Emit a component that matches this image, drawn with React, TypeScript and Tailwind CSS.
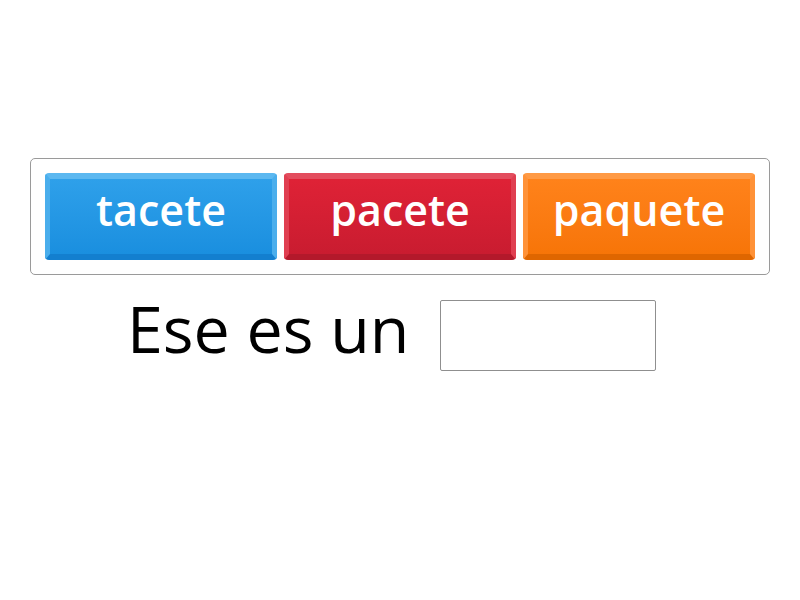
const words = [
  {
    text: "tacete",
    edge: "border-t-[#5cb8f0] border-l-[#4aaeec] border-r-[#4aaeec] border-b-[#137fcf]",
    face: "bg-gradient-to-b from-[#2ea0ea] to-[#1a8fdf]",
  },
  {
    text: "pacete",
    edge: "border-t-[#e34d5e] border-l-[#e03f51] border-r-[#e03f51] border-b-[#b3192b]",
    face: "bg-gradient-to-b from-[#df2236] to-[#c91c30]",
  },
  {
    text: "paquete",
    edge: "border-t-[#ff9a45] border-l-[#ff9238] border-r-[#ff9238] border-b-[#df6600]",
    face: "bg-gradient-to-b from-[#ff821a] to-[#f77508]",
  },
];

export default function App() {
  return (
    <div className="w-[800px] h-[600px] bg-white font-['Open_Sans',sans-serif]">
      <div className="pt-[158px] px-[30px]">
        <div className="rounded-[5px] border border-[#9a9a9a] p-[14px] flex gap-[7px]">
          {words.map((w) => (
            <div
              key={w.text}
              className={`w-[232px] h-[87px] rounded-[4px] border-t-[6px] border-l-[5px] border-r-[5px] border-b-[6px] ${w.edge} ${w.face} flex items-center justify-center`}
            >
              <span className="text-white font-semibold text-[43px] leading-none pb-[15px]">{w.text}</span>
            </div>
          ))}
        </div>
        <div className="flex items-start mt-[21px] pl-[97px]">
          <span className="text-[64.5px] leading-none text-black">Ese es un</span>
          <div className="ml-[31px] mt-[4px] w-[216px] h-[71px] rounded-[2px] border border-[#8f8f8f] bg-white" />
        </div>
      </div>
    </div>
  );
}
